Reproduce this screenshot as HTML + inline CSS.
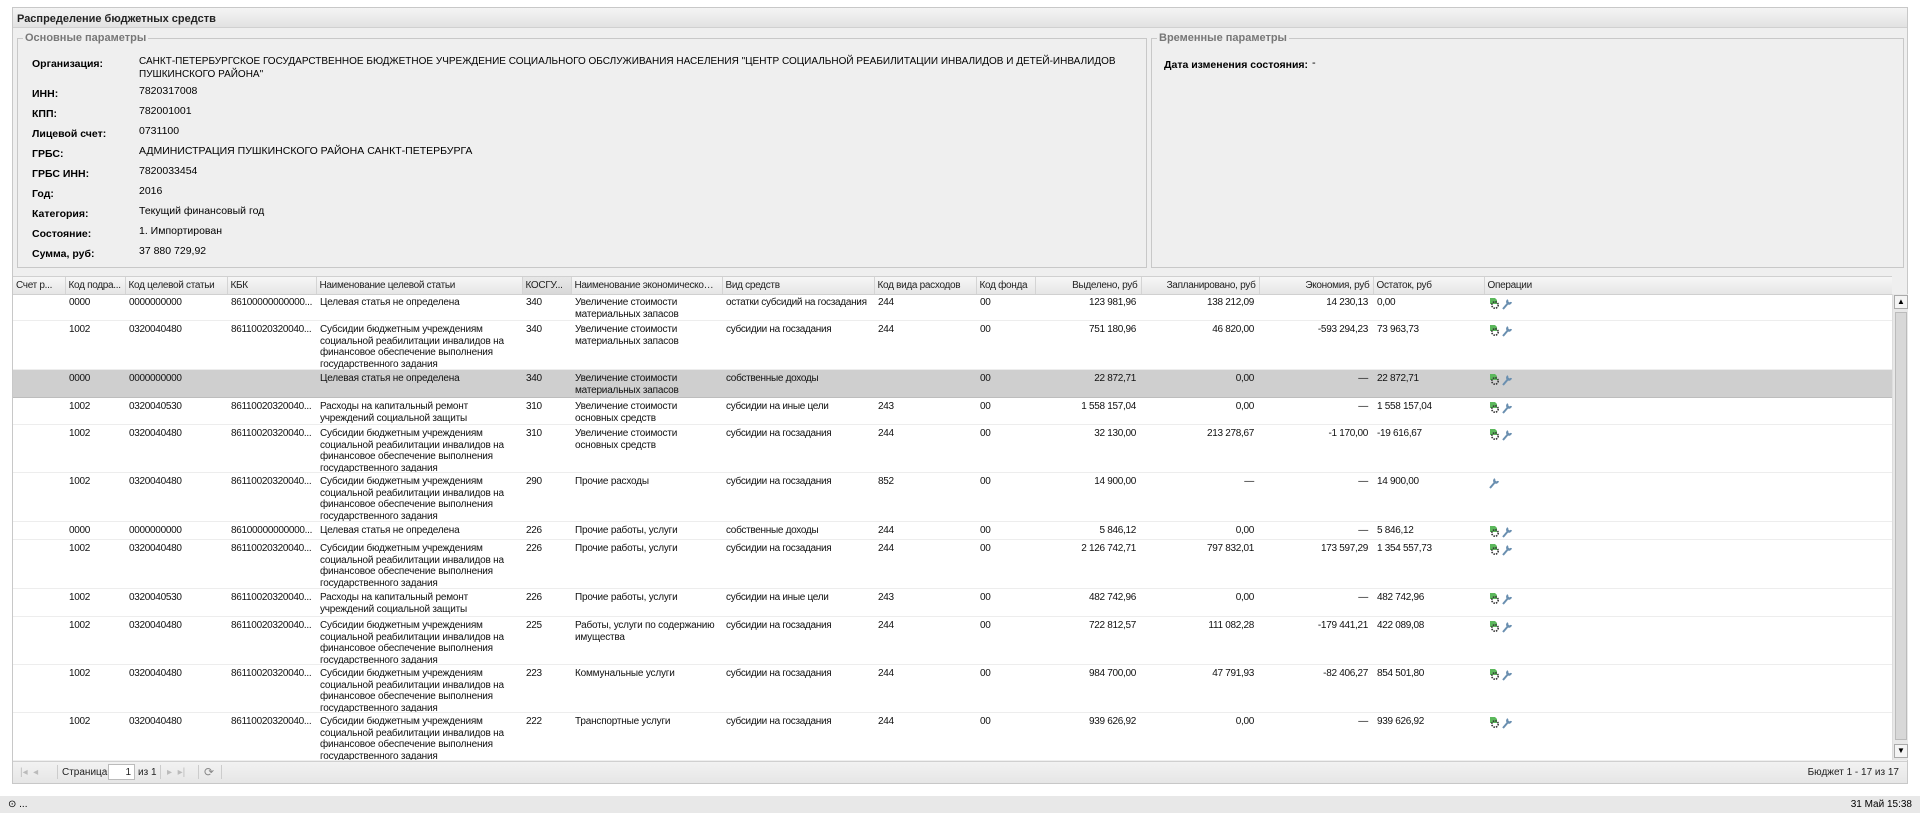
<!DOCTYPE html>
<html><head><meta charset="utf-8">
<style>
*{box-sizing:border-box;margin:0;padding:0}
body{width:1920px;height:813px;background:#fff;font-family:"Liberation Sans",Tahoma,sans-serif;font-size:11px;color:#000;position:relative;overflow:hidden}
.abs{position:absolute}
#panel{left:12px;top:7px;width:1896px;height:777px;border:1px solid #c8c8c8;background:#efefef}
#title{left:13px;top:8px;width:1894px;height:20px;background:linear-gradient(#f4f4f4,#e2e2e2);border-bottom:1px solid #d0d0d0;font-weight:bold;font-size:11px;padding:5px 4px;color:#222}
fieldset{position:absolute;border:1px solid #c8c8c8;background:#efefef}
.legend{position:absolute;top:-7px;background:#efefef;color:#777;font-weight:bold;padding:0 2px}
.lbl{position:absolute;left:14px;font-weight:bold;font-size:10.5px}
.val{position:absolute;left:121px;font-size:10.5px}
#grid{left:13px;top:276px;width:1879px;height:484px;background:#fff;border-top:1px solid #d0d0d0;overflow:hidden}
table{border-collapse:collapse;table-layout:fixed;position:absolute;left:0;top:0}
th{height:17px;font-weight:normal;text-align:left;padding:0 3px;background:linear-gradient(#f7f7f7,#e6e6e6);border-right:1px solid #d4d4d4;border-bottom:1px solid #d0d0d0;white-space:nowrap;overflow:hidden;text-overflow:ellipsis;color:#222;font-size:10px;letter-spacing:-0.3px}
th.s{background:linear-gradient(#e8e8e8,#d8d8d8)}
td{vertical-align:top;padding:0;border-bottom:1px solid #ededed;color:#111;font-size:10px}
td>div{padding:3px 3px 0 4px;line-height:11.5px;white-space:nowrap;overflow:hidden;text-overflow:ellipsis;letter-spacing:-0.3px}
td.w>div{white-space:normal;letter-spacing:-0.2px}
td.r>div{text-align:right;padding-right:5px}
tr.sel td{background:#cfcfcf;border-bottom:1px solid #bdbdbd}
.ico{display:inline-block;vertical-align:top}
#sb{left:1892px;top:294px;width:16px;height:466px;background:#e8e8e8;border-left:1px solid #ddd}
#pt{left:13px;top:761px;width:1894px;height:22px;background:linear-gradient(#f2f2f2,#e6e6e6);border-top:1px solid #d0d0d0;color:#222;font-size:10px}
#status{left:0;top:796px;width:1920px;height:17px;background:#e8e8e8;font-size:10px}
</style></head><body>
<div class="abs" id="panel"></div>
<div class="abs" id="title">Распределение бюджетных средств</div>

<fieldset style="left:17px;top:38px;width:1130px;height:230px">
<div class="legend" style="left:5px">Основные параметры</div>
<div class="lbl" style="top:19px">Организация:</div>
<div class="val" style="top:16px;line-height:13px;width:990px;font-size:10px">САНКТ-ПЕТЕРБУРГСКОЕ ГОСУДАРСТВЕННОЕ БЮДЖЕТНОЕ УЧРЕЖДЕНИЕ СОЦИАЛЬНОГО ОБСЛУЖИВАНИЯ НАСЕЛЕНИЯ "ЦЕНТР СОЦИАЛЬНОЙ РЕАБИЛИТАЦИИ ИНВАЛИДОВ И ДЕТЕЙ-ИНВАЛИДОВ ПУШКИНСКОГО РАЙОНА"</div>
<div class="lbl" style="top:49px">ИНН:</div><div class="val" style="top:46px">7820317008</div>
<div class="lbl" style="top:69px">КПП:</div><div class="val" style="top:66px">782001001</div>
<div class="lbl" style="top:89px">Лицевой счет:</div><div class="val" style="top:86px">0731100</div>
<div class="lbl" style="top:109px">ГРБС:</div><div class="val" style="top:106px">АДМИНИСТРАЦИЯ ПУШКИНСКОГО РАЙОНА САНКТ-ПЕТЕРБУРГА</div>
<div class="lbl" style="top:129px">ГРБС ИНН:</div><div class="val" style="top:126px">7820033454</div>
<div class="lbl" style="top:149px">Год:</div><div class="val" style="top:146px">2016</div>
<div class="lbl" style="top:169px">Категория:</div><div class="val" style="top:166px">Текущий финансовый год</div>
<div class="lbl" style="top:189px">Состояние:</div><div class="val" style="top:186px">1. Импортирован</div>
<div class="lbl" style="top:209px">Сумма, руб:</div><div class="val" style="top:206px">37 880 729,92</div>
</fieldset>
<fieldset style="left:1151px;top:38px;width:753px;height:230px">
<div class="legend" style="left:5px">Временные параметры</div>
<div class="lbl" style="left:12px;top:20px">Дата изменения состояния:</div>
<div class="abs" style="left:160px;top:18px">-</div>
</fieldset>

<div class="abs" id="grid">
<table style="width:1895px">
<colgroup><col style="width:52px"><col style="width:60px"><col style="width:102px"><col style="width:89px"><col style="width:206px"><col style="width:49px"><col style="width:151px"><col style="width:152px"><col style="width:102px"><col style="width:59px"><col style="width:106px"><col style="width:118px"><col style="width:114px"><col style="width:111px"><col style="width:408px"><col style="width:16px"></colgroup>
<tr><th>Счет р...</th><th>Код подра...</th><th>Код целевой статьи</th><th>КБК</th><th>Наименование целевой статьи</th><th class="s">КОСГУ...</th><th>Наименование экономической ...</th><th>Вид средств</th><th>Код вида расходов</th><th>Код фонда</th><th style="text-align:right">Выделено, руб</th><th style="text-align:right">Запланировано, руб</th><th style="text-align:right">Экономия, руб</th><th>Остаток, руб</th><th>Операции</th><th></th></tr>
</table>
<table id="body" style="top:17px;width:1879px">
<colgroup><col style="width:52px"><col style="width:60px"><col style="width:102px"><col style="width:89px"><col style="width:206px"><col style="width:49px"><col style="width:151px"><col style="width:152px"><col style="width:102px"><col style="width:59px"><col style="width:106px"><col style="width:118px"><col style="width:114px"><col style="width:111px"><col style="width:408px"></colgroup>
<tr data-h="27"><td></td><td>0000</td><td>0000000000</td><td>86100000000000...</td><td class="w">Целевая статья не определена</td><td>340</td><td class="w">Увеличение стоимости материальных запасов</td><td>остатки субсидий на госзадания</td><td>244</td><td>00</td><td class="r">123 981,96</td><td class="r">138 212,09</td><td class="r">14 230,13</td><td>0,00</td><td>G</td></tr>
<tr data-h="49"><td></td><td>1002</td><td>0320040480</td><td>86110020320040...</td><td class="w">Субсидии бюджетным учреждениям социальной реабилитации инвалидов на финансовое обеспечение выполнения государственного задания</td><td>340</td><td class="w">Увеличение стоимости материальных запасов</td><td>субсидии на госзадания</td><td>244</td><td>00</td><td class="r">751 180,96</td><td class="r">46 820,00</td><td class="r">-593 294,23</td><td>73 963,73</td><td>G</td></tr>
<tr class="sel" data-h="28"><td></td><td>0000</td><td>0000000000</td><td></td><td class="w">Целевая статья не определена</td><td>340</td><td class="w">Увеличение стоимости материальных запасов</td><td>собственные доходы</td><td></td><td>00</td><td class="r">22 872,71</td><td class="r">0,00</td><td class="r">—</td><td>22 872,71</td><td>G</td></tr>
<tr data-h="27"><td></td><td>1002</td><td>0320040530</td><td>86110020320040...</td><td class="w">Расходы на капитальный ремонт учреждений социальной защиты</td><td>310</td><td class="w">Увеличение стоимости основных средств</td><td>субсидии на иные цели</td><td>243</td><td>00</td><td class="r">1 558 157,04</td><td class="r">0,00</td><td class="r">—</td><td>1 558 157,04</td><td>G</td></tr>
<tr data-h="48"><td></td><td>1002</td><td>0320040480</td><td>86110020320040...</td><td class="w">Субсидии бюджетным учреждениям социальной реабилитации инвалидов на финансовое обеспечение выполнения государственного задания</td><td>310</td><td class="w">Увеличение стоимости основных средств</td><td>субсидии на госзадания</td><td>244</td><td>00</td><td class="r">32 130,00</td><td class="r">213 278,67</td><td class="r">-1 170,00</td><td>-19 616,67</td><td>G</td></tr>
<tr data-h="49"><td></td><td>1002</td><td>0320040480</td><td>86110020320040...</td><td class="w">Субсидии бюджетным учреждениям социальной реабилитации инвалидов на финансовое обеспечение выполнения государственного задания</td><td>290</td><td class="w">Прочие расходы</td><td>субсидии на госзадания</td><td>852</td><td>00</td><td class="r">14 900,00</td><td class="r">—</td><td class="r">—</td><td>14 900,00</td><td>W</td></tr>
<tr data-h="18"><td></td><td>0000</td><td>0000000000</td><td>86100000000000...</td><td class="w">Целевая статья не определена</td><td>226</td><td class="w">Прочие работы, услуги</td><td>собственные доходы</td><td>244</td><td>00</td><td class="r">5 846,12</td><td class="r">0,00</td><td class="r">—</td><td>5 846,12</td><td>G</td></tr>
<tr data-h="49"><td></td><td>1002</td><td>0320040480</td><td>86110020320040...</td><td class="w">Субсидии бюджетным учреждениям социальной реабилитации инвалидов на финансовое обеспечение выполнения государственного задания</td><td>226</td><td class="w">Прочие работы, услуги</td><td>субсидии на госзадания</td><td>244</td><td>00</td><td class="r">2 126 742,71</td><td class="r">797 832,01</td><td class="r">173 597,29</td><td>1 354 557,73</td><td>G</td></tr>
<tr data-h="28"><td></td><td>1002</td><td>0320040530</td><td>86110020320040...</td><td class="w">Расходы на капитальный ремонт учреждений социальной защиты</td><td>226</td><td class="w">Прочие работы, услуги</td><td>субсидии на иные цели</td><td>243</td><td>00</td><td class="r">482 742,96</td><td class="r">0,00</td><td class="r">—</td><td>482 742,96</td><td>G</td></tr>
<tr data-h="48"><td></td><td>1002</td><td>0320040480</td><td>86110020320040...</td><td class="w">Субсидии бюджетным учреждениям социальной реабилитации инвалидов на финансовое обеспечение выполнения государственного задания</td><td>225</td><td class="w">Работы, услуги по содержанию имущества</td><td>субсидии на госзадания</td><td>244</td><td>00</td><td class="r">722 812,57</td><td class="r">111 082,28</td><td class="r">-179 441,21</td><td>422 089,08</td><td>G</td></tr>
<tr data-h="48"><td></td><td>1002</td><td>0320040480</td><td>86110020320040...</td><td class="w">Субсидии бюджетным учреждениям социальной реабилитации инвалидов на финансовое обеспечение выполнения государственного задания</td><td>223</td><td class="w">Коммунальные услуги</td><td>субсидии на госзадания</td><td>244</td><td>00</td><td class="r">984 700,00</td><td class="r">47 791,93</td><td class="r">-82 406,27</td><td>854 501,80</td><td>G</td></tr>
<tr data-h="48"><td></td><td>1002</td><td>0320040480</td><td>86110020320040...</td><td class="w">Субсидии бюджетным учреждениям социальной реабилитации инвалидов на финансовое обеспечение выполнения государственного задания</td><td>222</td><td class="w">Транспортные услуги</td><td>субсидии на госзадания</td><td>244</td><td>00</td><td class="r">939 626,92</td><td class="r">0,00</td><td class="r">—</td><td>939 626,92</td><td>G</td></tr>
</table>
</div>
<div class="abs" id="sb">
<div style="position:absolute;left:1px;top:1px;width:14px;height:14px;background:#f4f4f4;border:1px solid #aaa;font-size:8px;text-align:center;line-height:12px">▲</div>
<div style="position:absolute;left:2px;top:18px;width:12px;height:428px;background:#d8d8d8;border:1px solid #bbb"></div>
<div style="position:absolute;left:1px;top:450px;width:14px;height:14px;background:#f4f4f4;border:1px solid #aaa;font-size:8px;text-align:center;line-height:12px">▼</div>
</div>
<div class="abs" id="pt">
<span class="abs" style="left:7px;top:5px;color:#bbb">|◂ &nbsp;◂</span>
<span class="abs" style="left:44px;top:3px;width:1px;height:14px;background:#ccc"></span>
<span class="abs" style="left:49px;top:5px">Страница</span>
<span class="abs" style="left:95px;top:2px;width:27px;height:16px;background:#fff;border:1px solid #bbb;text-align:right;padding:2px 3px">1</span>
<span class="abs" style="left:125px;top:5px">из 1</span>
<span class="abs" style="left:147px;top:3px;width:1px;height:14px;background:#ccc"></span>
<span class="abs" style="left:154px;top:5px;color:#bbb">▸ &nbsp;▸|</span>
<span class="abs" style="left:185px;top:3px;width:1px;height:14px;background:#ccc"></span>
<span class="abs" style="left:191px;top:3px;color:#888;font-size:12px">⟳</span>
<span class="abs" style="left:208px;top:3px;width:1px;height:14px;background:#ccc"></span>
<span class="abs" style="right:8px;top:5px">Бюджет 1 - 17 из 17</span>
</div>
<div class="abs" id="status">
<span class="abs" style="left:8px;top:3px">⊙ ...</span>
<span class="abs" style="right:8px;top:3px">31 Май 15:38</span>
</div>
<script>
var g='<svg class="ico" width="28" height="13" viewBox="0 0 28 13"><path d="M2 1h5l2 2v4H2z" fill="#5cb85c"/><circle cx="7" cy="8" r="3.2" fill="none" stroke="#333" stroke-width="1.6" stroke-dasharray="1.5 1"/><path d="M15 12l6-7M20 3a2 2 0 1 0 3 2" stroke="#6a8fb0" stroke-width="2" fill="none"/></svg>';
var w='<svg class="ico" width="28" height="13" viewBox="0 0 28 13"><path d="M2 12l6-7M7 3a2 2 0 1 0 3 2" stroke="#6a8fb0" stroke-width="2" fill="none"/></svg>';
document.querySelectorAll('#body tr').forEach(function(tr){
 var h=+tr.getAttribute('data-h');
 var c=tr.lastElementChild;c.innerHTML=c.textContent=='W'?w:g;
 tr.querySelectorAll('td').forEach(function(td){var d=document.createElement('div');d.style.height=(h-1)+'px';d.innerHTML=td.innerHTML;td.innerHTML='';td.appendChild(d);});
});
</script>
</body></html>
